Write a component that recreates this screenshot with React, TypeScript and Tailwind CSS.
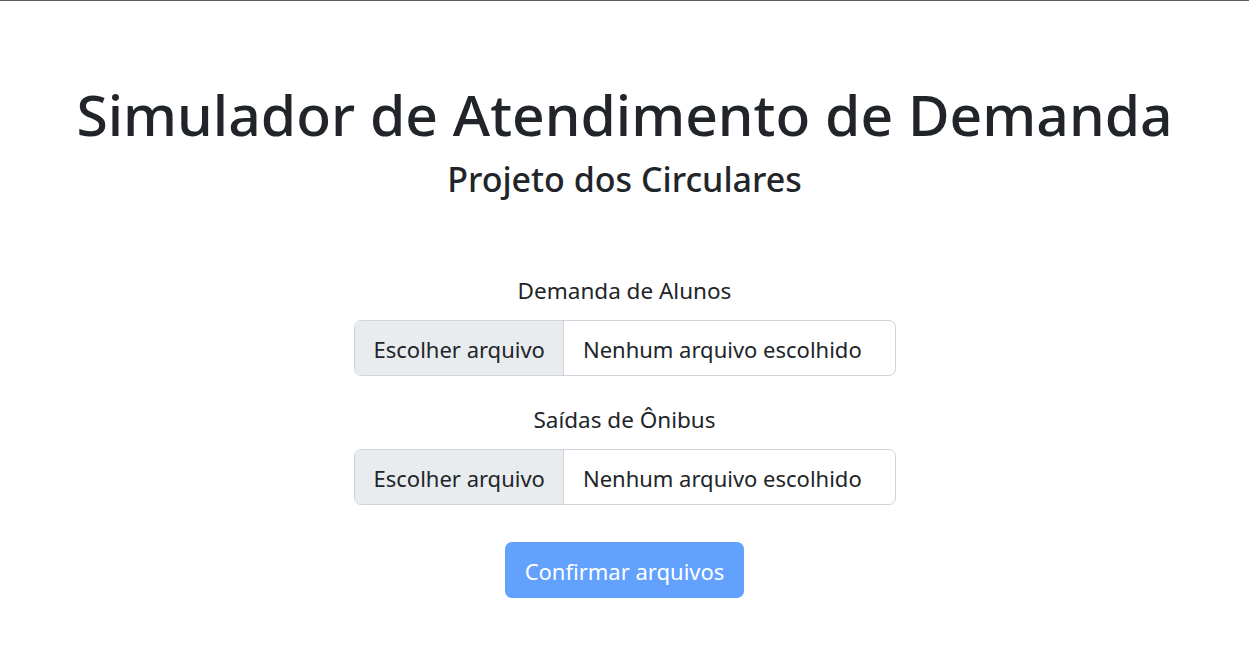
import React from "react";

function FileInput() {
  return (
    <div className="flex w-[542px] h-[56px] rounded-[7px] border border-[#ced4da] overflow-hidden text-[22px] text-[#212529]">
      <div className="flex items-center bg-[#e9ecef] border-r border-[#ced4da] pl-[19px] pr-[18px] pt-[3px] whitespace-nowrap">
        Escolher arquivo
      </div>
      <div className="flex items-center pl-[19px] pt-[3px] whitespace-nowrap">Nenhum arquivo escolhido</div>
    </div>
  );
}

export default function App() {
  return (
    <div
      className="min-h-[670px] bg-white border-t border-[#5c5c5c] text-[#212529]"
      style={{ fontFamily: '"Noto Sans", "Open Sans", sans-serif' }}
    >
      <div className="flex flex-col items-center pt-[73px]">
        <h1 className="text-[57px] leading-[80px] font-medium whitespace-nowrap">
          Simulador de Atendimento de Demanda
        </h1>
        <h2 className="text-[34px] leading-[44px] font-medium mt-[3px] whitespace-nowrap">
          Projeto dos Circulares
        </h2>
        <div className="mt-[75px] flex flex-col items-center">
          <label className="text-[22.5px] leading-[30px]">Demanda de Alunos</label>
          <div className="mt-[14px]">
            <FileInput />
          </div>
          <label className="text-[22.5px] leading-[30px] mt-[29px]">Saídas de Ônibus</label>
          <div className="mt-[14px]">
            <FileInput />
          </div>
          <button className="mt-[37px] h-[56px] w-[239px] pt-[3px] rounded-[7px] bg-[#62a1fe] text-white text-[22px] whitespace-nowrap">
            Confirmar arquivos
          </button>
        </div>
      </div>
    </div>
  );
}
